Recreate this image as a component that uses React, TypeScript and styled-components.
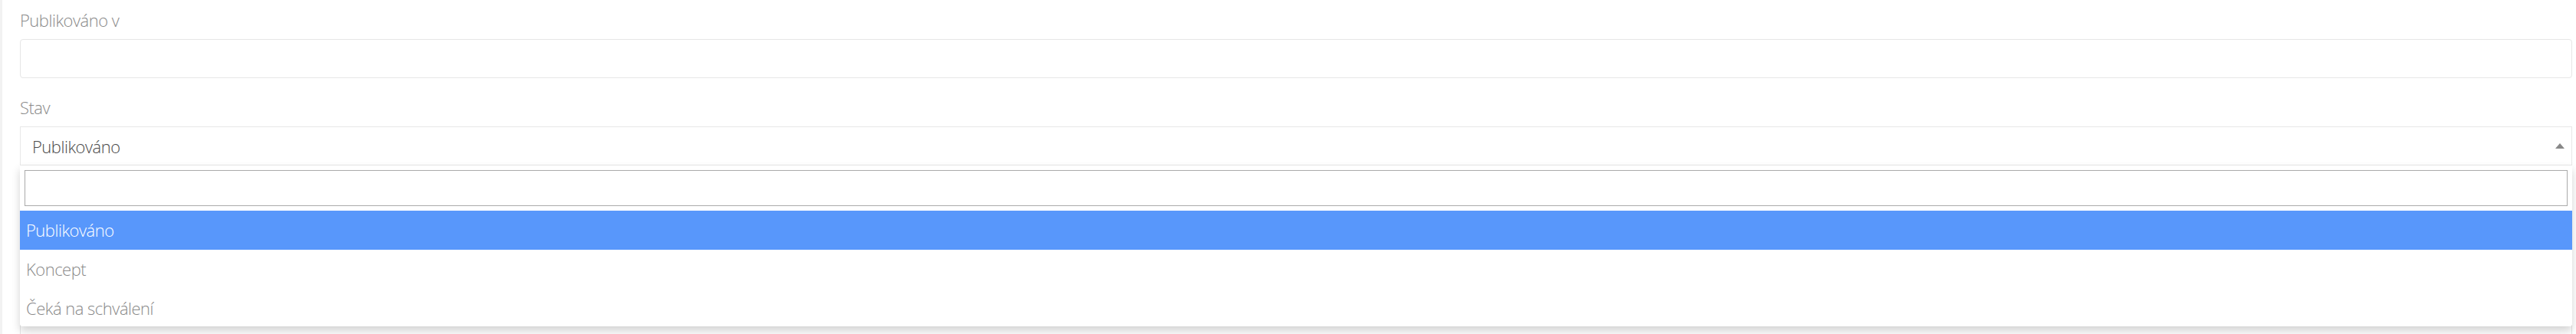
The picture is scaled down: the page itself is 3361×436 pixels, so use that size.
import React from "react";
import styled, { createGlobalStyle } from "styled-components";

const GlobalStyle = createGlobalStyle`
  html, body {
    margin: 0;
    padding: 0;
    background: #ffffff;
    overflow: hidden;
  }
  *, *::before, *::after {
    box-sizing: border-box;
  }
`;

const Page = styled.div`
  height: 436px;
  border-left: 3px solid #f2f2f2;
  padding: 11px 5px 0 23px;
  font-family: "Open Sans", "Liberation Sans", sans-serif;
  font-size: 22px;
  font-weight: 300;
  letter-spacing: -0.5px;
  line-height: 30px;
  color: #555555;
`;

const Group = styled.div`
  margin-bottom: 23px;
`;

const Label = styled.label`
  display: block;
  height: 30px;
  margin-bottom: 10px;
  color: #8a8a8a;
`;

const TextInput = styled.input`
  display: block;
  width: 100%;
  height: 51px;
  margin: 0;
  padding: 0 15px;
  border: 1px solid #e6e6e6;
  border-radius: 4px;
  background: #ffffff;
  font: inherit;
  color: #555555;
  outline: none;
`;

const SelectWrap = styled.div`
  position: relative;
`;

const SelectBox = styled.div`
  display: flex;
  align-items: center;
  height: 51px;
  padding: 0 9px 0 15px;
  border: 1px solid #e8e8e8;
  background: #ffffff;
  color: #4a4a4a;
`;

const SelectValue = styled.span`
  flex: 1;
`;

const Arrow = styled.span`
  width: 0;
  height: 0;
  border-style: solid;
  border-width: 0 6px 7px 6px;
  border-color: transparent transparent #888888 transparent;
`;

const Dropdown = styled.div`
  position: absolute;
  top: 100%;
  left: 0;
  right: 0;
  z-index: 10;
  background: #ffffff;
  border-radius: 0 0 4px 4px;
  box-shadow: 0 6px 12px rgba(0, 0, 0, 0.175);
`;

const SearchBox = styled.div`
  padding: 6px;
`;

const SearchField = styled.input`
  display: block;
  width: 100%;
  height: 47px;
  margin: 0;
  padding: 4px;
  border: 1px solid #aaaaaa;
  background: #ffffff;
  font: inherit;
  outline: none;
`;

const Options = styled.ul`
  list-style: none;
  margin: 0;
  padding: 0;
  max-height: 151px;
  overflow: hidden;
  border-radius: 0 0 4px 4px;
`;

const Option = styled.li<{ $active?: boolean }>`
  height: 51px;
  padding: 9.5px 8px 0;
  background: ${(p) => (p.$active ? "#5897fb" : "#ffffff")};
  color: ${(p) => (p.$active ? "#ffffff" : "#8a8a8a")};
  white-space: nowrap;
`;

const options = ["Publikováno", "Koncept", "Čeká na schválení"];

export default function App() {
  return (
    <>
      <GlobalStyle />
      <Page>
        <Group>
          <Label>Publikováno v</Label>
          <TextInput type="text" />
        </Group>
        <Group>
          <Label>Stav</Label>
          <SelectWrap>
            <SelectBox>
              <SelectValue>Publikováno</SelectValue>
              <Arrow />
            </SelectBox>
            <Dropdown>
              <SearchBox>
                <SearchField type="search" />
              </SearchBox>
              <Options>
                {options.map((o, i) => (
                  <Option key={o} $active={i === 0}>
                    {o}
                  </Option>
                ))}
              </Options>
            </Dropdown>
          </SelectWrap>
        </Group>
        <Group>
          <Label />
          <TextInput type="text" />
        </Group>
        <Group>
          <Label />
          <TextInput type="text" />
        </Group>
      </Page>
    </>
  );
}
